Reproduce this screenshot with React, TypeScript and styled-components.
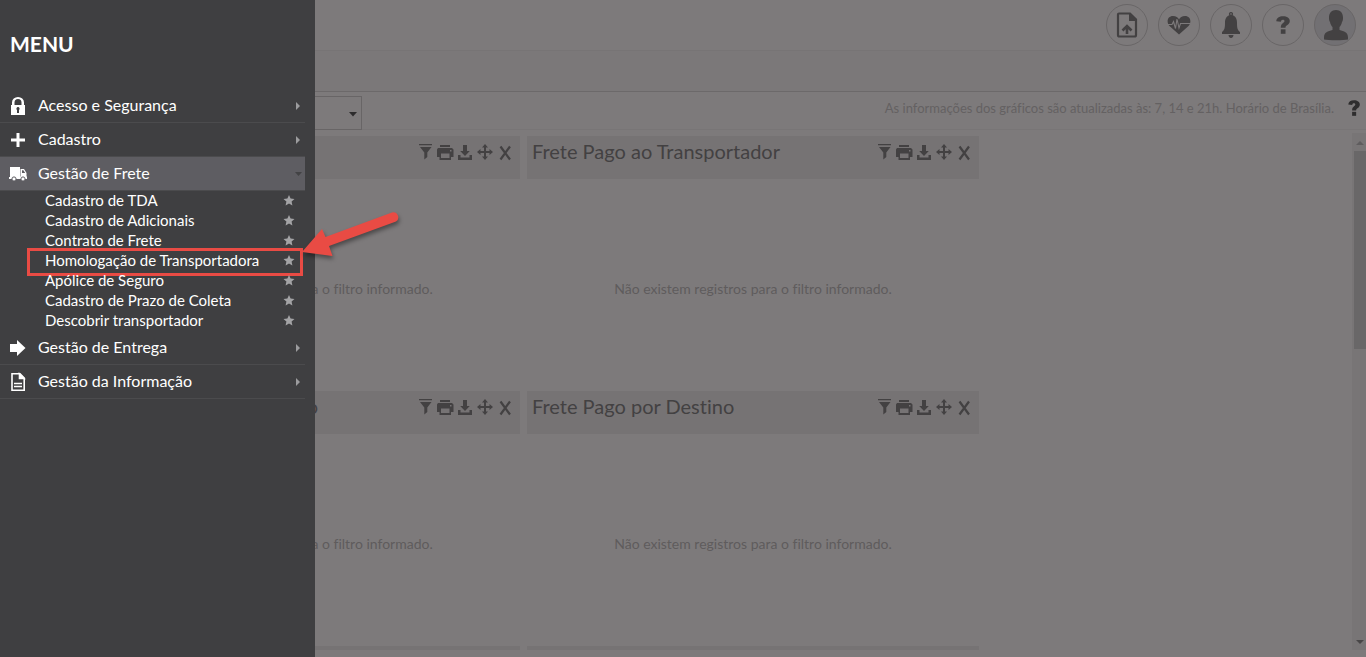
import React from "react";
import styled, { createGlobalStyle } from "styled-components";

const Global = createGlobalStyle`
  * { box-sizing: border-box; }
  body { margin: 0; background: #7d7a7b; overflow: hidden; font-variant-ligatures: none; }
  body, button, select { font-family: Lato, "Noto Sans", sans-serif; }
  button { border: 0; padding: 0; background: none; color: inherit; cursor: pointer; }
  ul { list-style: none; margin: 0; padding: 0; }
  a { color: inherit; text-decoration: none; }
`;

const Page = styled.div`
  display: flex;
  flex-direction: column;
  height: 100vh;
  background: #7d7a7b;
  color: #434142;
`;

const TopBar = styled.header`
  display: flex;
  justify-content: flex-end;
  align-items: center;
  gap: 10px;
  height: 51px;
  padding: 0 10px;
  border-bottom: 1px solid #777475;
`;

const RoundButton = styled.button<{ $filled?: boolean }>`
  display: flex;
  align-items: center;
  justify-content: center;
  width: 42px;
  height: 42px;
  border: 1px solid #696667;
  border-radius: 50%;
  background: ${(p) => (p.$filled ? "#727073" : "transparent")};
  color: #434142;
`;

const Strip = styled.div`
  height: 41px;
  background: #7b7879;
  border-bottom: 1px solid #6c696a;
`;

const FilterBar = styled.div`
  display: flex;
  align-items: flex-start;
  justify-content: space-between;
  height: 38px;
  padding: 4px 6px 0 68px;
  border-bottom: 1px solid #787576;
`;

const SelectBox = styled.div`
  display: flex;
  position: relative;
  width: 294px;
  height: 34px;
  color: #2c2b2c;
  svg { position: absolute; right: 5px; top: 16px; pointer-events: none; }
`;

const PeriodSelect = styled.select`
  appearance: none;
  width: 100%;
  border: 1px solid #686566;
  background: transparent;
`;

const Notice = styled.div`
  display: flex;
  align-items: center;
  gap: 14px;
  margin-top: 2px;
  color: #646162;
  font-size: 13px;
  line-height: 20px;
  button { display: flex; color: #2e2d2e; }
`;

const Body = styled.main`
  display: flex;
  flex: 1;
  min-height: 0;
  margin-bottom: 7px;
  padding-top: 3px;
`;

const Board = styled.div`
  display: grid;
  flex: 1;
  grid-template-columns: 452px 452px;
  grid-auto-rows: 248px;
  gap: 7px;
  padding: 3px 0 0 68px;
  overflow: hidden;
`;

const Panel = styled.section`
  display: flex;
  flex-direction: column;
`;

const PanelHead = styled.div`
  display: flex;
  justify-content: space-between;
  height: 43px;
  padding: 4px 5px 0 5px;
  background: #767374;
`;

const PanelTitle = styled.h2`
  margin: 0;
  font-size: 20px;
  font-weight: 400;
  line-height: 22px;
`;

const Tools = styled.div`
  display: flex;
  height: 24px;
  button { display: flex; align-items: center; justify-content: center; width: 20px; }
`;

const Empty = styled.p`
  margin: 100px 0 0;
  color: #5f5c5d;
  font-size: 14px;
  line-height: 20px;
  text-align: center;
`;

const ScrollTrack = styled.div`
  display: flex;
  flex-direction: column;
  align-items: flex-end;
  width: 14px;
  padding: 6px 0 4px;
  background: #787576;
`;

const ScrollArrow = styled.svg<{ $dim?: boolean }>`
  width: 12px;
  height: 7px;
  fill: ${(p) => (p.$dim ? "#5f5d5e" : "#484647")};
`;

const ScrollThumb = styled.div`
  width: 12px;
  height: 39%;
  margin: 5px 0 auto;
  background: #696768;
`;

const Sidebar = styled.nav`
  position: fixed;
  inset: 0 auto 0 0;
  width: 315px;
  padding: 29px 10px 0 0;
  background: #3f3f41;
  color: #fff;
`;

const MenuTitle = styled.h1`
  margin: 0 0 30px 10px;
  font-size: 21px;
  font-weight: 700;
  line-height: 30px;
`;

const MenuButton = styled.button<{ $open?: boolean }>`
  display: flex;
  align-items: center;
  width: 100%;
  height: 34px;
  padding: 0 3px 0 8px;
  border-bottom: 1px solid #4b4b4d;
  background: ${(p) => (p.$open ? "#5e5d62" : "transparent")};
  font-size: 16px;
  line-height: 20px;
  text-align: left;
  span { flex: 1; margin-left: 10px; padding-bottom: 2px; }
`;

const MenuChevron = styled.svg`
  width: 7px;
  height: 8px;
`;

const SubItem = styled.li`
  position: relative;
  display: flex;
  align-items: center;
  justify-content: space-between;
  height: 20px;
  padding: 0 10px 0 45px;
  font-size: 15px;
  line-height: 18px;
  a { padding-bottom: 2px; }
  button { display: flex; color: #a3a3a5; }
`;

const Highlight = styled.div`
  position: absolute;
  inset: -3px 2px -5px 27px;
  border: 3px solid #e94b44;
  pointer-events: none;
`;

const Pointer = styled.svg`
  position: absolute;
  left: 100%;
  top: -41px;
  width: 100px;
  height: 50px;
  margin-left: -3px;
  overflow: visible;
  filter: drop-shadow(1px 3px 2px rgba(0, 0, 0, 0.4));
  pointer-events: none;
`;

const icons = {
  lock: (
    <svg width="20" height="20" viewBox="0 0 20 20" fill="currentColor">
      <path fillRule="evenodd" d="M3 9h1V6.500a6 5.500 0 0 1 12 0V9h1v10H3zM6.500 9h7V6.500a3.500 3.500 0 0 0-7 0zM10 11a1.700 1.700 0 0 0-1 3v3h2v-3a1.700 1.700 0 0 0-1-3z" />
    </svg>
  ),
  plus: (
    <svg width="20" height="20" viewBox="0 0 20 20" fill="currentColor">
      <path d="M8.500 3h3v5.500H17v3h-5.500V17h-3v-5.500H3v-3h5.500z" />
    </svg>
  ),
  truck: (
    <svg width="20" height="20" viewBox="0 0 20 20" fill="currentColor">
      <path d="M2 3h10v9.500h7V15H1v-2h1z" />
      <path fillRule="evenodd" d="M12.500 5H16l2.500 4v4h-6zM14 6.200v2.800h3.200l-1.800-2.800z" />
      <circle cx="6" cy="15" r="2.100" stroke="#5e5d62" />
      <circle cx="15" cy="15" r="2.100" stroke="#5e5d62" />
    </svg>
  ),
  arrow: (
    <svg width="20" height="20" viewBox="0 0 20 20" fill="currentColor">
      <path d="M2 6h7V2l8.500 8L9 18v-4H2z" />
    </svg>
  ),
  doc: (
    <svg width="20" height="20" viewBox="0 0 20 20" fill="none" stroke="currentColor" strokeWidth="1.600">
      <path d="M4 1.800h8l4.200 4.200v12.200H4z" />
      <path d="M11.500 2v4.500H16z" fill="currentColor" />
      <path d="M6 11.500h8M6 14.500h8" />
    </svg>
  ),
};

const QuestionIcon = ({ w, h }: { w: number; h: number }) => (
  <svg width={w} height={h} viewBox="0 0 14 18" fill="currentColor" preserveAspectRatio="none">
    <path d="M.3 5.200C.5 1.800 3.200.2 7 .2c4 0 6.800 1.800 6.800 4.800 0 2.200-1.300 3.300-2.700 4.300-1.200.8-1.600 1.200-1.600 2.400H4.800c0-2.400.6-3.400 2-4.500 1.200-.9 1.700-1.300 1.700-2.100S7.900 3.700 6.800 3.700c-1.200 0-1.700.7-1.900 2z" />
    <path d="M4.800 13.300h4.700v4.500H4.800z" />
  </svg>
);

const FilterIcon = () => (
  <svg width="16" height="18" viewBox="0 0 16 18" fill="currentColor">
    <path d="M2 1h13v1.200H2zM3 4h11.500l-4.200 5.500V14l-3 2.500v-7z" />
  </svg>
);
const PrintIcon = () => (
  <svg width="18" height="18" viewBox="0 0 18 18" fill="currentColor">
    <path fillRule="evenodd" d="M4 2h10v2H4zM2 5h14l1.500 1.500V14h-2.500v3H3.500v-3H1V6.500zM5 10.500V15h8.500v-4.500zM14 7v1.500h1.500V7z" />
  </svg>
);
const DownloadIcon = () => (
  <svg width="16" height="18" viewBox="0 0 16 18" fill="currentColor">
    <path d="M6 2h4v6h2.800L8 13 3.200 8H6zM1 12h2.500v2.500h9V12H15v5H1z" />
  </svg>
);
const MoveIcon = () => (
  <svg width="18" height="18" viewBox="0 0 18 18" fill="currentColor">
    <path d="M9 1l3 3.500h-2V8h3.500V6L17 9l-3.500 3v-2H10v3.500h2L9 17l-3-3.500h2V10H4.500v2L1 9l3.500-3v2H8V4.500H6z" />
  </svg>
);
const CloseIcon = () => (
  <svg width="14" height="18" viewBox="0 0 14 18" stroke="currentColor" strokeWidth="2.200">
    <path d="M2.500 3.500L12 16.500M12 3.500L2.500 16.500" />
  </svg>
);

const ChartPanel = ({ title }: { title: string }) => (
  <Panel>
    <PanelHead>
      <PanelTitle>{title}</PanelTitle>
      <Tools>
        <button aria-label="Filtrar"><FilterIcon /></button>
        <button aria-label="Imprimir"><PrintIcon /></button>
        <button aria-label="Baixar"><DownloadIcon /></button>
        <button aria-label="Mover"><MoveIcon /></button>
        <button aria-label="Fechar"><CloseIcon /></button>
      </Tools>
    </PanelHead>
    <Empty>Não existem registros para o filtro informado.</Empty>
  </Panel>
);

const EmptyPanel = () => (
  <Panel>
    <PanelHead />
  </Panel>
);

const MenuEntry = ({ icon, label, open }: { icon: React.ReactNode; label: string; open?: boolean }) => (
  <MenuButton $open={open} aria-expanded={!!open}>
    {icon}
    <span>{label}</span>
    <MenuChevron viewBox="0 0 7 8">
      {open ? <path d="M0 2h7L3.500 6z" fill="#434345" /> : <path d="M1 0v8l4-4z" fill="#9c9c9e" />}
    </MenuChevron>
  </MenuButton>
);

const freightItems = [
  "Cadastro de TDA",
  "Cadastro de Adicionais",
  "Contrato de Frete",
  "Homologação de Transportadora",
  "Apólice de Seguro",
  "Cadastro de Prazo de Coleta",
  "Descobrir transportador",
];
const highlighted = "Homologação de Transportadora";

export default function App() {
  return (
    <Page>
      <Global />
      <TopBar>
        <RoundButton aria-label="Importar arquivo">
          <svg width="22" height="26" viewBox="0 0 22 26" fill="none" stroke="currentColor" strokeWidth="2.200">
            <path d="M3 1.500h11l6 6v15.500a1.500 1.500 0 0 1-1.500 1.500h-15A1.500 1.500 0 0 1 2 23V2.500a1 1 0 0 1 1-1z" />
            <path d="M13 1.500V9H20.500V7.500L14.500 1.500z" fill="currentColor" stroke="none" />
            <path d="M11 22v-7M6.500 18.500L11 14l4.500 4.500" strokeWidth="2.600" />
          </svg>
        </RoundButton>
        <RoundButton aria-label="Saúde do sistema">
          <svg width="24" height="20" viewBox="0 0 24 20" fill="currentColor">
            <path d="M12 19.500L2.500 11C-1 7 .5 1 6 1c3 0 5 1.500 6 3.500C13 2.500 15 1 18 1c5.500 0 7 6 3.500 10z" />
            <path d="M0 9.500h5l1.500-3 2 7L10 4l2 9 1.500-4.500h10" fill="none" stroke="#7d7a7b" strokeWidth="1.100" />
          </svg>
        </RoundButton>
        <RoundButton aria-label="Notificações">
          <svg width="20" height="28" viewBox="0 0 20 28" fill="currentColor">
            <path fillRule="evenodd" d="M10 1a2 2 0 0 1 1.700 3.200C15 5.500 16 8 16 12c0 5 .5 7 3 9v2H1v-2c2.500-2 3-4 3-9 0-4 1-6.500 4.300-7.800A2 2 0 0 1 10 1zm0 1.200a.8.8 0 1 0 0 1.600.8.800 0 0 0 0-1.600z" />
            <path d="M7.500 24h5c0 1.500-1 3-2.500 3s-2.500-1.500-2.500-3z" />
          </svg>
        </RoundButton>
        <RoundButton aria-label="Ajuda"><QuestionIcon w={14} h={18} /></RoundButton>
        <RoundButton aria-label="Perfil" $filled>
          <svg width="26" height="32" viewBox="0 0 26 32" fill="currentColor">
            <path d="M14 1c4.500 0 7 3 7 7.500 0 1.500 0 3-1 4.500-.5 2.500-1.500 4-2.500 5v3c4.500 1.500 8.500 2 8.500 7.500v2c-4 1-20 1-24 0v-2c0-5.500 4-6 8.500-7.500v-3c-1-1-2-2.500-2.500-5-1-1.500-1-3-1-4.500C7 4 9.500 1 14 1z" />
          </svg>
        </RoundButton>
      </TopBar>
      <Strip />
      <FilterBar>
        <SelectBox>
          <PeriodSelect aria-label="Período" />
          <svg width="8" height="5" viewBox="0 0 8 5"><path d="M0 0h8L4 4.500z" fill="currentColor" /></svg>
        </SelectBox>
        <Notice>
          As informações dos gráficos são atualizadas às: 7, 14 e 21h. Horário de Brasília.
          <button aria-label="Ajuda dos gráficos"><QuestionIcon w={12} h={16} /></button>
        </Notice>
      </FilterBar>
      <Body>
        <Board>
          <ChartPanel title="Frete Pago" />
          <ChartPanel title="Frete Pago ao Transportador" />
          <ChartPanel title="Frete Pago por Faturamento" />
          <ChartPanel title="Frete Pago por Destino" />
          <EmptyPanel />
          <EmptyPanel />
        </Board>
        <ScrollTrack>
          <ScrollArrow viewBox="0 0 12 7" $dim><path d="M2 6h8L6 2z" /></ScrollArrow>
          <ScrollThumb />
          <ScrollArrow viewBox="0 0 12 7"><path d="M2 1h8L6 5z" /></ScrollArrow>
        </ScrollTrack>
      </Body>
      <Sidebar>
        <MenuTitle>MENU</MenuTitle>
        <MenuEntry icon={icons.lock} label="Acesso e Segurança" />
        <MenuEntry icon={icons.plus} label="Cadastro" />
        <MenuEntry icon={icons.truck} label="Gestão de Frete" open />
        <ul>
          {freightItems.map((item) => (
            <SubItem key={item}>
              <a href="#">{item}</a>
              <button aria-label={"Favoritar " + item}>
                <svg width="12" height="12" viewBox="0 0 12 12" fill="currentColor">
                  <path d="M6 0l1.600 3.600 3.900.4-2.900 2.600.8 3.900L6 8.500l-3.400 2 .8-3.900L.5 4l3.900-.4z" />
                </svg>
              </button>
              {item === highlighted && (
                <>
                  <Highlight />
                  <Pointer viewBox="0 0 100 50" fill="#e94b44">
                    <path d="M0 42L20 19l3.500 8L90 2.500a5 5 0 0 1 4 9L27 36l3.500 10z" />
                  </Pointer>
                </>
              )}
            </SubItem>
          ))}
        </ul>
        <MenuEntry icon={icons.arrow} label="Gestão de Entrega" />
        <MenuEntry icon={icons.doc} label="Gestão da Informação" />
      </Sidebar>
    </Page>
  );
}
